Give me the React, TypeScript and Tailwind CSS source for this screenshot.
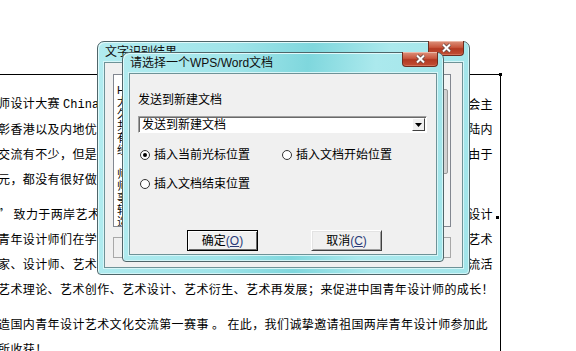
import type { ReactNode } from 'react';

type LineProps = { left: ReactNode; right?: string; dot?: boolean };

function DocLine({ left, right, dot }: LineProps) {
  return (
    <div className="flex h-[25px] items-center whitespace-nowrap">
      <span className="-ml-[2px]">{left}</span>
      {right && (
        <span className={`ml-auto flex items-center ${dot ? 'mr-[1px]' : 'mr-[7px]'}`}>
          {right}
          {dot && <span className="ml-[3px] mt-[8px] h-[3px] w-[3px] bg-black" />}
        </span>
      )}
    </div>
  );
}

function CloseButton() {
  return (
    <div className="absolute top-[-1px] right-[5px] flex h-[15px] w-[36px] items-center justify-center rounded-b-[4px] border border-t-0 border-[#6e2d20] bg-[linear-gradient(180deg,#dc927c_0%,#c9573e_45%,#b23922_55%,#c24f35_100%)] shadow-[inset_0_1px_0_#ecb8a8,inset_0_-1px_0_#d26e56]">
      <svg width="11" height="10" viewBox="0 0 11 10">
        <path d="M2 1.5 L9 8.5 M9 1.5 L2 8.5" stroke="#6b4a44" strokeWidth="3.6" />
        <path d="M2 1.5 L9 8.5 M9 1.5 L2 8.5" stroke="#ffffff" strokeWidth="2" />
      </svg>
    </div>
  );
}

type WinProps = { title: string; className: string; children: ReactNode };

function Win({ title, className, children }: WinProps) {
  return (
    <div
      className={`absolute flex flex-col rounded-t-[7px] rounded-b-[4px] border border-[#4f6569] bg-[linear-gradient(95deg,#b2ecf0_0%,#9fe4e9_35%,#7fd7dd_55%,#abe9ed_75%,#a2e5ea_100%)] px-[6px] pb-[6px] shadow-[inset_1px_1px_0_#e0fafb,inset_-1px_-1px_0_#d2f5f7] ${className}`}
    >
      <div className="flex h-[20px] shrink-0 items-center pl-[1px] text-[12px] text-[#101010]">{title}</div>
      <CloseButton />
      <div className="flex-1 overflow-hidden border border-[#6e9297] bg-[#f0f0f0] shadow-[0_0_0_1px_#d6f6f8]">{children}</div>
    </div>
  );
}

function ClassicButton({ label, hotkey, primary }: { label: string; hotkey: string; primary?: boolean }) {
  return (
    <div
      className={`flex h-[21px] w-[71px] items-center justify-center border bg-[#f0f0f0] text-[12px] text-black ${
        primary
          ? 'border-black shadow-[inset_1px_1px_0_#ffffff,inset_-1px_-1px_0_#696969]'
          : 'border-t-white border-l-white border-r-[#404040] border-b-[#404040] shadow-[inset_1px_1px_0_#e3e3e3,inset_-1px_-1px_0_#a0a0a0]'
      }`}
    >
      {label}
      <span className="text-[#2a3b78]">
        (<span className="underline">{hotkey}</span>)
      </span>
    </div>
  );
}

function Radio({ checked, label }: { checked?: boolean; label: string }) {
  return (
    <div className="flex h-[16px] items-center gap-[4px]">
      <span className="flex h-[10px] w-[10px] items-center justify-center rounded-full border border-[#333] bg-white">
        {checked && <span className="h-[4px] w-[4px] rounded-full bg-black" />}
      </span>
      <span>{label}</span>
    </div>
  );
}

const textboxLines = ['Hong Kong', '大赛', '久远', '共同', '有所', '经验', '', '师生', '师范', '事业', '转型', '迄今'];

export default function App() {
  return (
    <div className="relative h-[351px] w-[576px] overflow-hidden bg-white text-black">
      {/* document page behind the dialogs */}
      <div className="relative mt-[74px] h-[300px] w-[501px] border-t border-r border-black pt-[16px] font-['Noto_Sans_CJK_SC',sans-serif] text-[12px] tracking-[0.4px]">
        <span className="absolute top-[-2px] right-[-2px] h-[3px] w-[3px] bg-black" />
        <div>
          <DocLine
            left={
              <>
                师设计大赛 <span className="font-['Liberation_Mono',monospace] tracking-normal">China</span> 由香港
              </>
            }
            right="会主"
          />
          <DocLine left="彰香港以及内地优秀设计" right="陆内" />
          <DocLine left="交流有不少，但是学术" right="由于" />
          <DocLine left="元，都没有很好做到位" />
        </div>
        <div className="mt-[10px]">
          <DocLine left="” 致力于两岸艺术交流" right="设计" dot />
          <DocLine left="青年设计师们在学术上" right="艺术" />
          <DocLine left="家、设计师、艺术家们" right="流活" />
          <DocLine left="艺术理论、艺术创作、艺术设计、艺术衍生、艺术再发展；来促进中国青年设计师的成长！" />
        </div>
        <div className="mt-[10px]">
          <DocLine left="造国内青年设计艺术文化交流第一赛事 。 在此，我们诚挚邀请祖国两岸青年设计师参加此" />
          <DocLine left="所收获！" />
        </div>
      </div>

      {/* text recognition result dialog */}
      <Win title="文字识别结果" className="left-[97px] top-[41px] h-[234px] w-[373px] font-['Liberation_Sans','Noto_Sans_CJK_SC',sans-serif]">
        <div className="flex h-full flex-col pt-[11px] pr-[11px] pl-[8px]">
          <div className="flex h-[153px] border border-[#828790] bg-white">
            <div className="flex-1 overflow-hidden pt-[9px] pl-[3px] text-[11px] leading-[12px] text-black">
              {textboxLines.map((line, i) => (
                <div key={i} className="h-[12px] whitespace-nowrap">
                  {line}
                </div>
              ))}
            </div>
            <div className="flex w-[17px] flex-col bg-[#f4f4f4]">
              <div className="flex h-[13px] items-center justify-center text-[6px] text-[#555]">▲</div>
              <div className="mx-[2px] mt-[1px] h-[85px] rounded-[2px] border border-[#9a9a9a] bg-[linear-gradient(90deg,#e4e4e4,#cfcfcf)]" />
              <div className="mt-auto flex h-[13px] items-center justify-center text-[6px] text-[#555]">▼</div>
            </div>
          </div>
          <div className="mt-[10px] flex justify-between">
            <div className="h-[21px] w-[75px] border border-[#a8a8a8] bg-[#f0f0f0]" />
            <div className="h-[21px] w-[75px] border border-[#a8a8a8] bg-[#f0f0f0]" />
          </div>
        </div>
      </Win>

      {/* choose document dialog */}
      <Win title="请选择一个WPS/Word文档" className="left-[122px] top-[52px] h-[210px] w-[322px] font-['Liberation_Sans','Noto_Sans_CJK_SC',sans-serif]">
        <div className="flex flex-col pt-[18px] pl-[8px] text-[12px] leading-[16px]">
          <div className="h-[16px]">发送到新建文档</div>
          <div className="mt-[8px] flex h-[17px] w-[289px] items-center border border-t-[#a0a0a0] border-l-[#a0a0a0] border-r-white border-b-white bg-white shadow-[inset_1px_1px_0_#696969]">
            <span className="flex-1 pl-[3px]">发送到新建文档</span>
            <span className="mr-[1px] flex h-[13px] w-[13px] items-center justify-center border border-t-white border-l-white border-r-[#404040] border-b-[#404040] bg-[#f0f0f0]">
              <svg width="7" height="4" viewBox="0 0 7 4">
                <path d="M0 0 H7 L3.5 4 Z" fill="#000" />
              </svg>
            </span>
          </div>
          <div className="mt-[14px] grid grid-cols-[142px_1fr] pl-[2px]">
            <Radio checked label="插入当前光标位置" />
            <Radio label="插入文档开始位置" />
          </div>
          <div className="mt-[13px] pl-[2px]">
            <Radio label="插入文档结束位置" />
          </div>
          <div className="mt-[38px] flex gap-[53px] pl-[49px]">
            <ClassicButton label="确定" hotkey="O" primary />
            <ClassicButton label="取消" hotkey="C" />
          </div>
        </div>
      </Win>
    </div>
  );
}
